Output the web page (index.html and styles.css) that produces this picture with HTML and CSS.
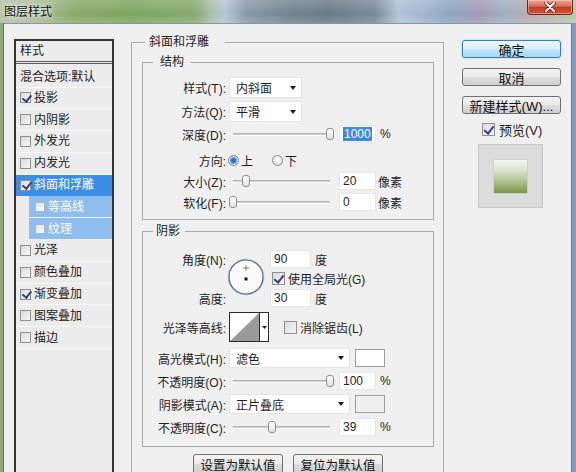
FILE: index.html
```html
<!DOCTYPE html>
<html lang="zh-CN">
<head>
<meta charset="utf-8">
<title>图层样式</title>
<link rel="stylesheet" href="styles.css">
</head>
<body>
<div class="window">
  <div class="titlebar">
    <span class="title">图层样式</span>
    <div class="close">
      <svg width="12" height="10" viewBox="0 0 12 10"><path d="M2 1 L10 9 M10 1 L2 9" stroke="#5a2018" stroke-width="3.6" stroke-linecap="round"/><path d="M2 1 L10 9 M10 1 L2 9" stroke="#fff" stroke-width="2" stroke-linecap="round"/></svg>
    </div>
  </div>
  <div class="frame">
    <div class="client">
      <div class="stylelist">
        <div class="list-head">样式</div>
        <div class="list-blend">混合选项:默认</div>
        <div class="li"><span class="cb sm on"></span>投影</div>
        <div class="li"><span class="cb sm"></span>内阴影</div>
        <div class="li"><span class="cb sm"></span>外发光</div>
        <div class="li"><span class="cb sm"></span>内发光</div>
        <div class="li sel"><span class="cb sm on"></span>斜面和浮雕</div>
        <div class="li sub"><span class="cb xs"></span>等高线</div>
        <div class="li sub"><span class="cb xs"></span>纹理</div>
        <div class="li"><span class="cb sm"></span>光泽</div>
        <div class="li"><span class="cb sm"></span>颜色叠加</div>
        <div class="li"><span class="cb sm on"></span>渐变叠加</div>
        <div class="li"><span class="cb sm"></span>图案叠加</div>
        <div class="li"><span class="cb sm"></span>描边</div>
      </div>

      <div class="main">
        <div class="group outer">
          <div class="gtitle t-outer">斜面和浮雕</div>

          <div class="group inner struct">
            <div class="gtitle t-struct">结构</div>
            <div class="row h21 first">
              <span class="lbl">样式(T):</span>
              <div class="select w73"><span>内斜面</span><i class="arrow"></i></div>
            </div>
            <div class="row h21">
              <span class="lbl">方法(Q):</span>
              <div class="select w73"><span>平滑</span><i class="arrow"></i></div>
            </div>
            <div class="row h18">
              <span class="lbl">深度(D):</span>
              <div class="slider"><div class="track"></div><div class="thumb" style="left:101px"></div></div>
              <span class="num"><span class="hl">1000</span></span>
              <span class="unit">%</span>
            </div>
            <div class="row h18 dir">
              <span class="lbl">方向:</span>
              <span class="radio on"></span><span class="rtext">上</span>
              <span class="radio"></span><span class="rtext">下</span>
            </div>
            <div class="row h18">
              <span class="lbl">大小(Z):</span>
              <div class="slider"><div class="track"></div><div class="thumb" style="left:17px"></div></div>
              <span class="num">20</span>
              <span class="unit px">像素</span>
            </div>
            <div class="row h18">
              <span class="lbl">软化(F):</span>
              <div class="slider"><div class="track"></div><div class="thumb" style="left:4px"></div></div>
              <span class="num">0</span>
              <span class="unit px">像素</span>
            </div>
          </div>

          <div class="group inner shadow">
            <div class="gtitle t-shadow">阴影</div>
            <div class="angle-grid">
              <span class="lbl g-a">角度(N):</span>
              <svg class="dial" width="38" height="38" viewBox="0 0 38 38">
                <circle cx="19" cy="19" r="17.5" fill="#fbfbfb" stroke="#c9d2de" stroke-width="2"/>
                <circle cx="19" cy="19" r="17" fill="none" stroke="#56637e" stroke-width="1.1"/>
                <path d="M19 7 V13 M16 10 H22" stroke="#7a7a7a" stroke-width="1"/>
                <rect x="17.5" y="19.5" width="3" height="3" fill="#111"/>
              </svg>
              <div class="cell g-ac"><span class="num w41">90</span><span class="unit">度</span></div>
              <div class="cell g-bc"><span class="cb on"></span><span class="cbtext">使用全局光(G)</span></div>
              <span class="lbl g-c">高度:</span>
              <div class="cell g-cc"><span class="num w41">30</span><span class="unit">度</span></div>
            </div>
            <div class="row h30 contour-row">
              <span class="lbl">光泽等高线:</span>
              <svg class="contour" width="40" height="30" viewBox="0 0 40 30">
                <rect x="0.5" y="0.5" width="39" height="29" fill="#fff" stroke="#2a2a2a"/>
                <polygon points="1,29 30,1 30,29" fill="#9a9a9a"/>
                <line x1="30.5" y1="0" x2="30.5" y2="30" stroke="#2a2a2a"/>
                <polygon points="33,14 38,14 35.5,17" fill="#222"/>
              </svg>
              <span class="cb aa"></span><span class="cbtext">消除锯齿(L)</span>
            </div>
            <div class="row h20 m6">
              <span class="lbl">高光模式(H):</span>
              <div class="select w121"><span>滤色</span><i class="arrow"></i></div>
              <span class="colorbox white"></span>
            </div>
            <div class="row h18 m4">
              <span class="lbl">不透明度(O):</span>
              <div class="slider"><div class="track"></div><div class="thumb" style="left:101px"></div></div>
              <span class="num">100</span>
              <span class="unit">%</span>
            </div>
            <div class="row h20 m4">
              <span class="lbl">阴影模式(A):</span>
              <div class="select w121"><span>正片叠底</span><i class="arrow"></i></div>
              <span class="colorbox grey"></span>
            </div>
            <div class="row h18 m4">
              <span class="lbl">不透明度(C):</span>
              <div class="slider"><div class="track"></div><div class="thumb" style="left:43px"></div></div>
              <span class="num">39</span>
              <span class="unit">%</span>
            </div>
          </div>

          <div class="bottom-buttons">
            <div class="btn low">设置为默认值</div>
            <div class="btn low">复位为默认值</div>
          </div>
        </div>
      </div>

      <div class="side">
        <div class="btn side-btn default">确定</div>
        <div class="btn side-btn">取消</div>
        <div class="btn side-btn">新建样式(W)...</div>
        <div class="preview-check"><span class="cb on"></span><span class="cbtext big">预览(V)</span></div>
        <div class="preview"><div class="swatch"></div></div>
      </div>
    </div>
  </div>
</div>
</body>
</html>
```
FILE: styles.css
```css
* { box-sizing: border-box; }
html, body { margin: 0; padding: 0; }
body {
  width: 576px;
  height: 472px;
  overflow: hidden;
  font-family: "Liberation Sans", "Noto Sans CJK SC", sans-serif;
  font-size: 12px;
  color: #1e1e1e;
  background: #f0f0f0;
}
.window { display: flex; flex-direction: column; height: 472px; }

/* title bar */
.titlebar {
  height: 23px;
  flex: none;
  display: flex;
  align-items: flex-start;
  background:
    linear-gradient(rgba(255,255,255,0.18), rgba(255,255,255,0) 60%, rgba(255,255,255,0.15)),
    linear-gradient(to right, #b2bea6 0, #a6b993 40px, #88aa6a 75px, #7ea560 130px, #86aa6e 195px, #a9bfae 212px, #b3c5d7 225px, #8a9aaa 245px, #72828e 290px, #6a7a88 330px, #7a8a9a 375px, #b0c3d8 398px, #a0b5cd 425px, #8ca6c0 450px, #a299b6 480px, #9cb0c2 505px, #b9aab0 530px, #b8c8a6 576px);
}
.title {
  padding: 2px 0 0 4px;
  line-height: 17px;
  font-family: "Noto Sans CJK SC", sans-serif;
  font-size: 12px;
  color: #111;
  text-shadow: 0 0 4px #fff, 0 0 7px rgba(255,255,255,0.9);
}
.close {
  margin-left: auto;
  margin-right: 3px;
  width: 46px;
  height: 15px;
  border: 1px solid #6a2a22;
  border-top: none;
  border-radius: 0 0 4px 4px;
  background: linear-gradient(#e9a898, #d86a55 45%, #c23b22 52%, #d0563a);
  box-shadow: inset 0 0 0 1px rgba(255,220,210,0.45);
  display: flex;
  align-items: center;
  justify-content: center;
}

/* frame + client */
.frame {
  flex: 1;
  min-height: 0;
  display: flex;
  padding: 0 4px 0 3px;
  background: linear-gradient(to right, #93a97d 0, #93a97d 3px, #7f9dc3 3px);
}
.client {
  flex: 1;
  display: flex;
  align-items: flex-start;
  padding: 15px 0 0 10px;
  background: #f0f0f0;
  border-top: 1px solid #8595a3;
  border-left: 1px solid #66775a;
  border-right: 1px solid #5f7fa8;
  overflow: hidden;
}

/* style list */
.stylelist {
  width: 100px;
  height: 460px;
  flex: none;
  border: 2px solid #353535;
  background: #ececec;
  line-height: 16px;
}
.list-head {
  height: 23px;
  padding: 2px 0 0 4px;
  border-bottom: 3px double #5a5a5a;
}
.list-blend {
  height: 23.5px;
  padding: 5px 0 0 4px;
  border-bottom: 1px solid #f8f8f8;
}
.li {
  height: 21.8px;
  display: flex;
  align-items: center;
  padding-left: 4px;
  border-bottom: 1px solid #f8f8f8;
}
.li .cb { margin-right: 3px; }
.li.sel { background: #3b8ee6; color: #fff; border-bottom-color: #3b8ee6; }
.li.sub {
  margin-left: 13px;
  padding-left: 6px;
  background: #8fbdee;
  color: #fff;
  border-bottom-color: #e9f2fb;
}

/* checkboxes */
.cb {
  position: relative;
  display: inline-block;
  flex: none;
  width: 13px;
  height: 13px;
  border: 1px solid #8e8f8f;
  background: linear-gradient(135deg, #dadada, #f7f7f7);
}
.cb.sm { width: 11px; height: 11px; }
.cb.xs { width: 10px; height: 10px; margin-right: 3px; background: linear-gradient(135deg, #dde6f0, #fbfbfb); border-color: #a9b9cc; }
.cb.on::after {
  content: "";
  position: absolute;
  left: 3px;
  top: 0;
  width: 4px;
  height: 8px;
  border: solid #2d3f86;
  border-width: 0 2px 2px 0;
  transform: rotate(38deg);
}
.cb.sm.on::after { left: 2.5px; top: -0.5px; width: 3.5px; height: 7px; }
.cbtext { margin-left: 3px; }
.cbtext.big { font-size: 13px; margin-left: 4px; }

/* main panel */
.main { width: 313px; flex: none; margin: 3px 0 0 17px; }
.group { border: 1px solid #a8a8a8; }
.outer { padding: 0 9px 8px 10px; height: 470px; }
.gtitle {
  width: fit-content;
  height: 15px;
  line-height: 15px;
  margin-top: -8px;
  background: #f0f0f0;
  white-space: nowrap;
}
.t-outer { margin-left: 3px; padding: 0 16px 0 4px; }
.t-struct { margin-left: 10px; padding: 0 6px 0 7px; }
.t-shadow { margin-left: 10px; padding: 0 5px 0 3px; }

.inner { margin-top: 12px; }
.struct { padding-bottom: 8px; }
.shadow { margin-top: 11px; padding-bottom: 10px; }

.row { display: flex; align-items: center; margin-top: 3px; }
.row.first { margin-top: 7px; }
.row.dir { margin-top: 8px; }
.row.m4 { margin-top: 4px; }
.row.m6 { margin-top: 6px; }
.h18 { height: 18px; }
.h20 { height: 20px; }
.h21 { height: 21px; }
.h30 { height: 30px; }
.lbl {
  width: 83px;
  margin-right: 3px;
  flex: none;
  text-align: right;
  white-space: nowrap;
}
.dir .lbl { margin-right: 2px; }

/* dropdowns */
.select {
  display: flex;
  align-items: center;
  height: 100%;
  padding: 0 5px 0 6px;
  background: #fff;
  border: 1px solid #e4e4e4;
  flex: none;
}
.w73 { width: 73px; }
.w121 { width: 121px; }
.arrow {
  margin-left: auto;
  width: 0;
  height: 0;
  border-left: 3.5px solid transparent;
  border-right: 3.5px solid transparent;
  border-top: 4px solid #1c1c1c;
}
.colorbox {
  width: 30px;
  height: 18px;
  margin-left: 5px;
  border: 1px solid #9c9c9c;
}
.colorbox.white { background: #fff; }
.colorbox.grey { background: #efefef; }

/* sliders */
.slider {
  position: relative;
  width: 105px;
  height: 18px;
  margin-right: 5px;
  flex: none;
  display: flex;
  align-items: center;
  padding: 0 4px;
}
.track {
  flex: 1;
  height: 3px;
  background: #cfcfcf;
  border-top: 1px solid #b4b4b4;
  border-bottom: 1px solid #fbfbfb;
}
.thumb {
  position: absolute;
  top: 3px;
  width: 8px;
  height: 12px;
  margin-left: -4px;
  border: 1px solid #8d8d8d;
  border-radius: 3px;
  background: linear-gradient(#ffffff, #e2e2e2);
}

/* number fields */
.num {
  width: 37px;
  height: 18px;
  flex: none;
  padding-left: 3px;
  line-height: 16px;
  background: #fff;
  border: 1px solid #e6e6e6;
  margin-right: 4px;
}
.num.w41 { width: 41px; }
.hl { background: #3a8ae0; color: #fff; padding: 0 1px; }
.unit { white-space: nowrap; }
.unit.px { margin-left: -2px; }

/* radio */
.radio {
  width: 11px;
  height: 11px;
  flex: none;
  border-radius: 50%;
  border: 1px solid #8a8a8a;
  background: radial-gradient(circle at 50% 40%, #ffffff, #d8d8d8);
  margin-right: 2px;
}
.radio.on {
  background: radial-gradient(circle at 50% 50%, #2b64b0 0, #3a7acb 2px, #8ab8e8 3.5px, #eaeaea 4px);
  border-color: #6f7f96;
}
.rtext { margin-right: 19px; }

/* angle grid */
.angle-grid {
  display: grid;
  grid-template-columns: 83px 44px 1fr;
  grid-template-rows: 18px 21px 18px;
  margin-top: 11px;
  align-items: center;
}
.angle-grid .lbl { width: auto; margin-right: 0; }
.g-a { grid-column: 1; grid-row: 1; }
.g-c { grid-column: 1; grid-row: 3; }
.dial { grid-column: 2; grid-row: 1 / 4; align-self: start; margin: 8px 0 0 1px; }
.cell { display: flex; align-items: center; height: 100%; }
.g-ac { grid-column: 3; grid-row: 1; }
.g-bc { grid-column: 3; grid-row: 2; padding-left: 2px; }
.g-cc { grid-column: 3; grid-row: 3; }

.contour-row { margin-top: 5px; }
.contour { flex: none; }
.cb.aa { margin-left: 15px; }

/* buttons */
.btn {
  display: flex;
  align-items: center;
  justify-content: center;
  border: 1px solid #707070;
  border-radius: 3px;
  background: linear-gradient(#f3f3f3 0, #ebebeb 48%, #dddddd 52%, #cfcfcf 100%);
  white-space: nowrap;
  color: #111;
}
.bottom-buttons {
  display: flex;
  justify-content: center;
  gap: 10px;
  margin-top: 7px;
}
.btn.low { width: 90px; height: 20px; font-size: 12.5px; }

.side { width: 99px; flex: none; margin: 1px 0 0 18px; display: flex; flex-direction: column; }
.side-btn { height: 18px; font-size: 13px; margin-bottom: 10px; }
.side-btn.default {
  border-color: #3c7fb1;
  background: linear-gradient(#eaf6fd 0, #d9f0fc 48%, #bee6fd 52%, #a7d9f5 100%);
  box-shadow: 0 0 2px #7cc4ee;
}
.preview-check { display: flex; align-items: center; height: 13px; margin: -1px 0 0 20px; }
.preview {
  width: 65px;
  height: 64px;
  margin: 8px 0 0 16px;
  background: #dcdcdc;
  border: 1px solid #c6c6c6;
  display: flex;
  align-items: center;
  justify-content: center;
}
.swatch {
  width: 33px;
  height: 33px;
  background: linear-gradient(#f7f8f1 0, #d7e0c8 35%, #a8bb86 70%, #7a9648 100%);
  box-shadow: 0 0 1px rgba(0,0,0,0.35);
}
```
